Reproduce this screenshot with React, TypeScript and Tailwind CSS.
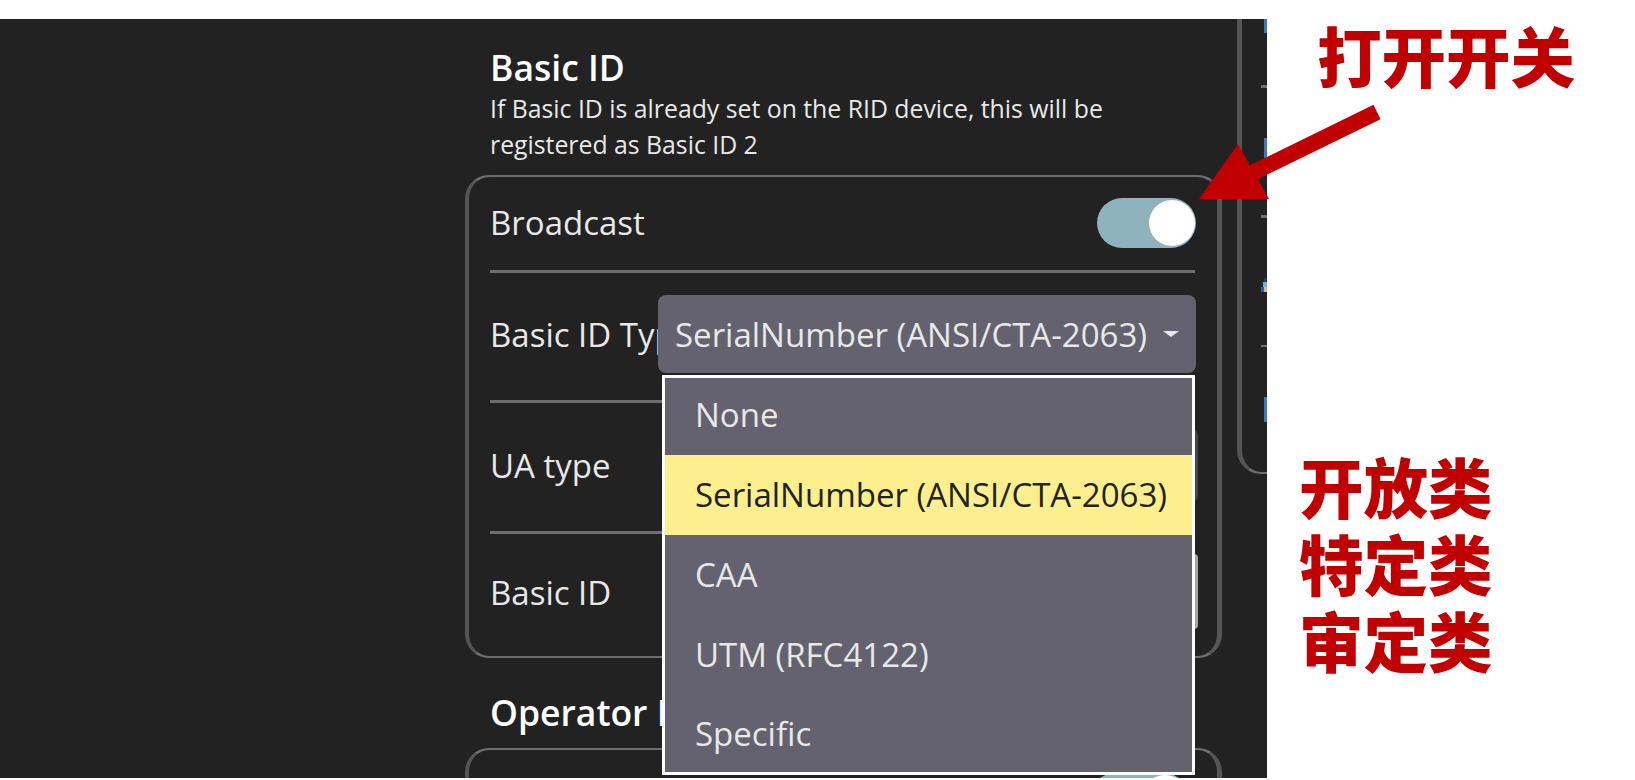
const cjk = { fontFamily: '"Noto Sans CJK SC", sans-serif' };

const options = ['None', 'SerialNumber (ANSI/CTA-2063)', 'CAA', 'UTM (RFC4122)', 'Specific'];

function Toggle() {
  return (
    <div className="-mr-[1px] flex h-[50px] w-[99px] shrink-0 items-center justify-end rounded-full bg-[#8fb3bd] pr-[1px]">
      <div className="h-[46px] w-[46px] rounded-full bg-white" />
    </div>
  );
}

function Row({ label, className, children }: { label: string; className: string; children?: React.ReactNode }) {
  return (
    <div className={`flex items-center justify-between ${className}`}>
      <span className="w-[168px] shrink-0 overflow-hidden whitespace-nowrap">{label}</span>
      {children}
    </div>
  );
}

function Divider() {
  return <div className="h-[3px] bg-[#6e6e6e]" />;
}

function Dropdown() {
  return (
    <div className="absolute left-[4px] top-[80px] z-10 w-[533px] border-[3px] border-white bg-[#64626f]">
      {options.map((o, i) => (
        <div
          key={o}
          className={`flex items-center pl-[30px] ${i === 0 ? 'h-[77px] pb-[4px]' : i === 4 ? 'h-[77px] pt-[1px]' : 'h-[80px]'} ${i === 1 ? 'bg-[#fdef8d] text-[#222222]' : 'text-[#e8e8e8]'}`}
        >
          {o}
        </div>
      ))}
    </div>
  );
}

// bits of the next column that stick out at the right edge of the dark area
function SideBits() {
  return (
    <div className="flex flex-col items-end">
      <div className="h-[14px] w-[3px] bg-[#3a78c4]" />
      <div className="mt-[52px] h-[3px] w-[6px] bg-[#6e6e6e]" />
      <div className="mt-[50px] h-[20px] w-[3px] bg-[#3a78c4]" />
      <div className="mt-[57px] h-[3px] w-[6px] bg-[#6e6e6e]" />
      <svg className="mt-[60px]" width="6" height="14" viewBox="0 0 6 14">
        <rect x="3" y="0" width="3" height="4" fill="#1f3a73" />
        <rect x="2" y="4" width="4" height="5" fill="#6db3e0" />
        <rect x="0" y="9" width="3" height="5" fill="#2d5fa8" />
        <rect x="3" y="9" width="3" height="5" fill="#e8b860" />
      </svg>
      <div className="mt-[53px] h-[2px] w-[6px] bg-[#6e6e6e]" />
      <div className="mt-[50px] h-[25px] w-[3px] bg-[#3a78c4]" />
    </div>
  );
}

export default function App() {
  return (
    <div
      className="flex h-[780px] w-[1635px] flex-col overflow-hidden bg-white text-[33px] text-[#e8e8e8]"
      style={{ fontFamily: '"Open Sans", sans-serif' }}
    >
      <div className="h-[19px] shrink-0" />
      <div className="flex h-[759px] shrink-0">
        <div className="flex w-[1267px] shrink-0 overflow-hidden bg-[#222222] pl-[465px]">
          <div className="w-[757px] shrink-0">
            <div className="pl-[25px] pt-[28px]">
              <h2 className="h-[40px] text-[35.5px] font-semibold leading-[40px] text-white">Basic ID</h2>
              <p className="mb-[13px] mt-[3px] w-[640px] text-[24.8px] leading-[36px]">
                If Basic ID is already set on the RID device, this will be registered as Basic ID 2
              </p>
            </div>
            <div className="h-[483px] rounded-[24px] border-y-2 border-l-[4px] border-r-[5px] border-x-[#555555] border-y-[#6e6e6e] pl-[21px] pr-[22px]">
              <Row label="Broadcast" className="h-[93px] pb-[2px]">
                <Toggle />
              </Row>
              <Divider />
              <Row label="Basic ID Type" className="h-[127px] pb-[3px]">
                <div className="relative -mr-[1px] mb-[2px] flex h-[78px] w-[538px] shrink-0 items-center justify-between rounded-[8px] bg-[#64626f] pl-[17px] pr-[17px]">
                  <span className="pt-[2px]">SerialNumber (ANSI/CTA-2063)</span>
                  <div className="h-0 w-0 border-x-[8px] border-t-[6px] border-x-transparent border-t-[#e8e8e8]" />
                  <Dropdown />
                </div>
              </Row>
              <Divider />
              <Row label="UA type" className="h-[128px] pb-[3px]">
                <div className="-mr-[3px] h-[75px] w-[532px] rounded-[8px] bg-[#45454f]" />
              </Row>
              <Divider />
              <Row label="Basic ID" className="h-[117px] pt-[1px]">
                <div className="-mr-[3px] mb-[3px] h-[75px] w-[532px] rounded-[4px] bg-[#a5a5a5]" />
              </Row>
            </div>
            <h2 className="flex h-[90px] items-center pl-[25px] pt-[20px] text-[35.5px] font-semibold text-white">Operator ID</h2>
            <div className="flex h-[200px] justify-end rounded-[24px] border-y-2 border-l-[4px] border-r-[5px] border-x-[#555555] border-y-[#6e6e6e] pr-[29px] pt-[23px]">
              <Toggle />
            </div>
          </div>
          <div className="ml-[15px] h-[455px] w-[30px] shrink-0 rounded-bl-[24px] border-b-2 border-l-[5px] border-b-[#6e6e6e] border-l-[#555555]">
            <SideBits />
          </div>
        </div>
      </div>
      <svg className="absolute left-0 top-0" width="1635" height="780" viewBox="0 0 1635 780">
        <path d="M1377 112 L1240 179" stroke="#c00000" strokeWidth="16" fill="none" />
        <polygon points="1238,144 1199,199 1269,199" fill="#c00000" />
      </svg>
      <div className="absolute left-[1299px] top-[447px] text-[64.5px] font-black leading-[77px] text-[#c00000]" style={cjk}>
        开放类<br />特定类<br />审定类
      </div>
      <div className="absolute left-[1317px] top-[16px] text-[64.5px] font-black leading-[77px] text-[#c00000]" style={cjk}>
        打开开关
      </div>
    </div>
  );
}
